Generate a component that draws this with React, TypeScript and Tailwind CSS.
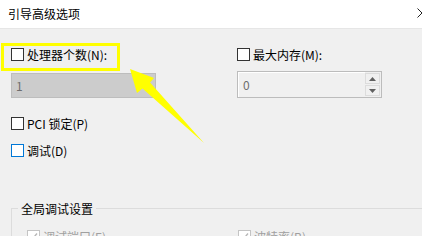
import React from 'react';

const font = { fontFamily: "'Noto Sans CJK SC', 'Noto Sans', sans-serif" };

function Box({ tone = 'normal', checked = false }: { tone?: 'normal' | 'focus' | 'disabled'; checked?: boolean }) {
  const border =
    tone === 'focus' ? 'border-[#0078d7]' : tone === 'disabled' ? 'border-[#c4c4c4]' : 'border-[#333333]';
  return (
    <div className={`w-[13px] h-[13px] shrink-0 border ${border} bg-white flex items-center justify-center`}>
      {checked && (
        <svg width="9" height="9" viewBox="0 0 9 9">
          <path d="M1 4.5 L3.5 7 L8 1.5" stroke="#b8b8b8" strokeWidth="1.4" fill="none" />
        </svg>
      )}
    </div>
  );
}

function Check({ label, tone, checked, dim }: { label: string; tone?: 'normal' | 'focus' | 'disabled'; checked?: boolean; dim?: boolean }) {
  return (
    <div className="flex items-center gap-[3px] h-[13px]">
      <Box tone={tone} checked={checked} />
      <span className={`text-[12px] leading-[13px] ${dim ? 'text-[#a0a0a0]' : 'text-black'}`}>{label}</span>
    </div>
  );
}

export default function App() {
  return (
    <div className="relative w-[422px] h-[236px] overflow-hidden bg-[#f0f0f0]" style={font}>
      {/* title bar */}
      <div className="h-[29px] bg-white border-b border-[#e6e6e6] flex items-center pl-[8px]">
        <span className="text-[12px] leading-none text-black">引导高级选项</span>
      </div>
      <svg className="absolute left-[417px] top-[8px]" width="10" height="10" viewBox="0 0 10 10">
        <path d="M0.5 0.5 L9.5 9.5 M9.5 0.5 L0.5 9.5" stroke="#222" strokeWidth="1" />
      </svg>

      {/* body */}
      <div className="pl-[11px] pt-[19px]">
        <div className="flex">
          <div className="w-[226px]">
            <Check label="处理器个数(N):" />
            <div className="mt-[12px] w-[145px] h-[25px] bg-[#cccccc] border border-[#bdbdbd] flex items-center pl-[4px]">
              <span className="text-[12px] leading-none text-[#6e6e6e]">1</span>
            </div>
          </div>
          <div>
            <Check label="最大内存(M):" />
            <div className="mt-[10px] w-[145px] h-[27px] bg-[#f0f0f0] border border-[#bcbcbc] flex">
              <div className="flex-1 flex items-center pl-[4px] border-t border-l border-white">
                <span className="text-[12px] leading-none text-[#6e6e6e]">0</span>
              </div>
              <div className="w-[15px] flex flex-col gap-[1px] py-[1px] mr-[1px]">
                <div className="flex-1 border border-[#dcdcdc] flex items-center justify-center">
                  <svg width="7" height="4" viewBox="0 0 7 4"><path d="M0 4 L3.5 0 L7 4Z" fill="#606060" /></svg>
                </div>
                <div className="flex-1 border border-[#dcdcdc] flex items-center justify-center">
                  <svg width="7" height="4" viewBox="0 0 7 4"><path d="M0 0 L3.5 4 L7 0Z" fill="#606060" /></svg>
                </div>
              </div>
            </div>
          </div>
        </div>

        <div className="mt-[19px]">
          <Check label="PCI 锁定(P)" />
        </div>
        <div className="mt-[14px]">
          <Check label="调试(D)" tone="focus" />
        </div>

        {/* group box */}
        <div className="mt-[51px] relative border-t border-l border-[#dcdcdc] h-[40px]">
          <span className="absolute left-[6px] top-[-7px] bg-[#f0f0f0] px-[3px] text-[12px] leading-[13px] text-black">
            全局调试设置
          </span>
          <div className="flex pt-[21px] pl-[15px]">
            <div className="w-[211px]">
              <Check label="调试端口(E)" tone="disabled" checked dim />
            </div>
            <Check label="波特率(B)" tone="disabled" checked dim />
          </div>
        </div>
      </div>

      {/* annotation overlay */}
      <div className="absolute left-[1px] top-[43px] w-[119px] h-[28px] border-[3px] border-[#ffff00]" />
      <svg className="absolute left-0 top-0" width="422" height="236" viewBox="0 0 422 236">
        <polygon points="130,69 154,78 150,82.5 204,143 142.5,88.5 137,93" fill="#ffff00" />
      </svg>
    </div>
  );
}
